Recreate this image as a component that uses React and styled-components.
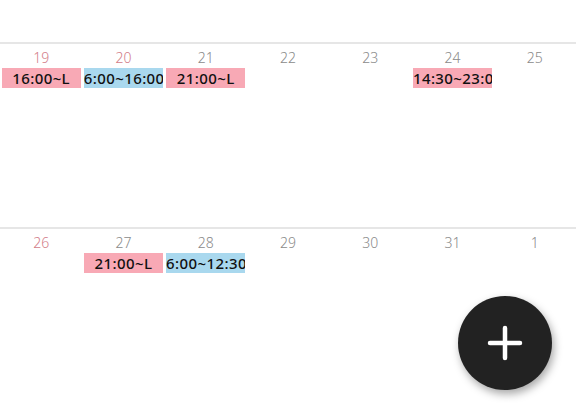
import React from "react";
import styled, {createGlobalStyle} from "styled-components";

const Global = createGlobalStyle`
  html, body {
    margin: 0;
    padding: 0;
    background: #fff;
    overflow: hidden;
  }
  body {
    font-family: "Noto Sans CJK JP", "Noto Sans", sans-serif;
  }
`;

const Screen = styled.div`
  position: relative;
  width: 576px;
  height: 411px;
  overflow: hidden;
  background: #fff;
`;

const PrevTail = styled.div`
  height: 42px;
`;

const Week = styled.div`
  display: grid;
  grid-template-columns: repeat(7, 1fr);
  height: 183px;
  border-top: 2px solid #e6e6e6;
`;

const Day = styled.div`
  display: flex;
  flex-direction: column;
  align-items: stretch;
  min-width: 0;
  padding: 5px 1.5px 0;
`;

const DayNum = styled.div`
  text-align: center;
  font-family: "Noto Sans", "Liberation Sans", sans-serif;
  font-size: 14px;
  line-height: 18px;
  font-weight: 300;
  color: ${p => (p.$red ? "#d27c88" : "#8a8a8a")};
  margin-bottom: 1px;
`;

const Shift = styled.div`
  height: 20px;
  line-height: 20px;
  background: ${p => (p.$kind === "early" ? "#a9d8ee" : "#f8a9b5")};
  color: #111;
  font-family: "Noto Sans", "Noto Sans CJK JP", sans-serif;
  font-size: 15px;
  font-weight: 500;
  letter-spacing: 0.4px;
  text-align: center;
  white-space: nowrap;
  overflow: hidden;
`;

const Fab = styled.button`
  position: absolute;
  left: 458px;
  top: 296px;
  width: 94px;
  height: 94px;
  border-radius: 50%;
  border: none;
  background: #222;
  box-shadow: 2px 4px 8px rgba(0, 0, 0, 0.35);
  display: flex;
  align-items: center;
  justify-content: center;
  padding: 0;
`;

const weeks = [
  [
    {n: 19, red: true, shift: {t: "16:00~L", k: "late"}},
    {n: 20, red: true, shift: {t: "6:00~16:00", k: "early"}},
    {n: 21, shift: {t: "21:00~L", k: "late"}},
    {n: 22},
    {n: 23},
    {n: 24, shift: {t: "14:30~23:00", k: "late"}},
    {n: 25},
  ],
  [
    {n: 26, red: true},
    {n: 27, shift: {t: "21:00~L", k: "late"}},
    {n: 28, shift: {t: "6:00~12:30", k: "early"}},
    {n: 29},
    {n: 30},
    {n: 31},
    {n: 1},
  ],
];

export default function App() {
  return (
    <Screen>
      <Global/>
      <PrevTail/>
      {weeks.map((w, i) => (
        <Week key={i}>
          {w.map(d => (
            <Day key={d.n}>
              <DayNum $red={d.red}>{d.n}</DayNum>
              {d.shift && <Shift $kind={d.shift.k}>{d.shift.t}</Shift>}
            </Day>
          ))}
        </Week>
      ))}
      <Fab aria-label="add">
        <svg width="36" height="36" viewBox="0 0 36 36">
          <path d="M18 3v30M3 18h30" stroke="#fff" strokeWidth="4.5" strokeLinecap="round"/>
        </svg>
      </Fab>
    </Screen>
  );
}
